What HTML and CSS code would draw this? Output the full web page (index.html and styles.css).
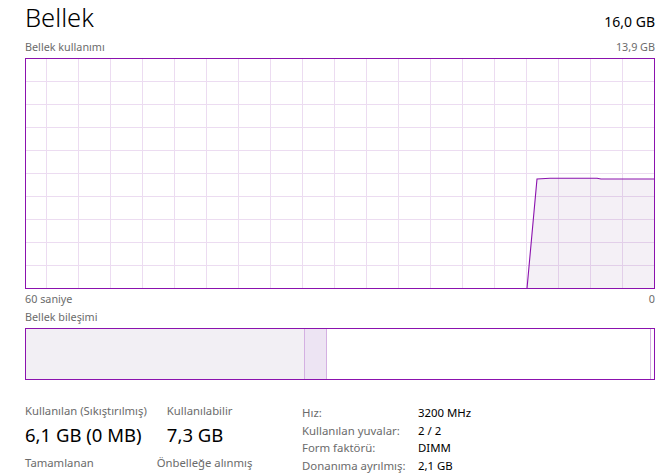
FILE: index.html
```html
<!DOCTYPE html>
<html lang="tr">
<head>
<meta charset="utf-8">
<link rel="stylesheet" href="styles.css">
</head>
<body>
<div class="panel">
  <div class="header">
    <div class="title">Bellek</div>
    <div class="total">16,0 GB</div>
  </div>
  <div class="caption-row">
    <span>Bellek kullanımı</span>
    <span>13,9 GB</span>
  </div>
  <svg class="graph" width="630" height="231" viewBox="0 0 630 231">
    <g stroke="#ecdcf1" stroke-width="1" shape-rendering="crispEdges">
      <line x1="21.5" y1="0" x2="21.5" y2="231"/>
      <line x1="53.5" y1="0" x2="53.5" y2="231"/>
      <line x1="85.5" y1="0" x2="85.5" y2="231"/>
      <line x1="117.5" y1="0" x2="117.5" y2="231"/>
      <line x1="149.5" y1="0" x2="149.5" y2="231"/>
      <line x1="181.5" y1="0" x2="181.5" y2="231"/>
      <line x1="213.5" y1="0" x2="213.5" y2="231"/>
      <line x1="245.5" y1="0" x2="245.5" y2="231"/>
      <line x1="277.5" y1="0" x2="277.5" y2="231"/>
      <line x1="309.5" y1="0" x2="309.5" y2="231"/>
      <line x1="341.5" y1="0" x2="341.5" y2="231"/>
      <line x1="373.5" y1="0" x2="373.5" y2="231"/>
      <line x1="405.5" y1="0" x2="405.5" y2="231"/>
      <line x1="437.5" y1="0" x2="437.5" y2="231"/>
      <line x1="469.5" y1="0" x2="469.5" y2="231"/>
      <line x1="501.5" y1="0" x2="501.5" y2="231"/>
      <line x1="533.5" y1="0" x2="533.5" y2="231"/>
      <line x1="565.5" y1="0" x2="565.5" y2="231"/>
      <line x1="597.5" y1="0" x2="597.5" y2="231"/>
      <line x1="0" y1="23.5" x2="630" y2="23.5"/>
      <line x1="0" y1="46.5" x2="630" y2="46.5"/>
      <line x1="0" y1="69.5" x2="630" y2="69.5"/>
      <line x1="0" y1="92.5" x2="630" y2="92.5"/>
      <line x1="0" y1="115.5" x2="630" y2="115.5"/>
      <line x1="0" y1="138.5" x2="630" y2="138.5"/>
      <line x1="0" y1="161.5" x2="630" y2="161.5"/>
      <line x1="0" y1="184.5" x2="630" y2="184.5"/>
      <line x1="0" y1="207.5" x2="630" y2="207.5"/>
    </g>
    <path d="M502 230.5 L512 121 L525 120.3 L572 120.3 L576 121 L629.5 121 L629.5 230.5 Z" fill="rgba(120,60,140,0.08)" stroke="none"/>
    <path d="M502 230.5 L512 121 L525 120.3 L572 120.3 L576 121 L629.5 121" fill="none" stroke="#8b12ae" stroke-width="1.1"/>
    <rect x="0.5" y="0.5" width="629" height="230" fill="none" stroke="#8b12ae" stroke-width="1" shape-rendering="crispEdges"/>
  </svg>
  <div class="axis-row">
    <span>60 saniye</span>
    <span>0</span>
  </div>
  <div class="caption comp-caption">Bellek bileşimi</div>
  <div class="composition">
    <div class="seg seg-used"></div>
    <div class="seg seg-mod"></div>
    <div class="seg seg-standby"></div>
    <div class="seg seg-free"></div>
  </div>
  <div class="stats">
    <div class="stat-cols">
      <div class="stat-row">
        <div class="stat">
          <div class="label">Kullanılan (Sıkıştırılmış)</div>
          <div class="value">6,1 GB (0 MB)</div>
        </div>
        <div class="stat">
          <div class="label">Kullanılabilir</div>
          <div class="value">7,3 GB</div>
        </div>
      </div>
      <div class="stat-row row2">
        <div class="stat">
          <div class="label">Tamamlanan</div>
        </div>
        <div class="stat">
          <div class="label">Önbelleğe alınmış</div>
        </div>
      </div>
    </div>
    <div class="props">
      <div class="plabel">Hız:</div><div class="pvalue">3200 MHz</div>
      <div class="plabel">Kullanılan yuvalar:</div><div class="pvalue">2 / 2</div>
      <div class="plabel">Form faktörü:</div><div class="pvalue">DIMM</div>
      <div class="plabel">Donanıma ayrılmış:</div><div class="pvalue">2,1 GB</div>
    </div>
  </div>
</div>
</body>
</html>
```

FILE: styles.css
```css
html, body {
  margin: 0;
  padding: 0;
  background: #ffffff;
}
body {
  font-family: "Noto Sans", "Open Sans", sans-serif;
  color: #000;
  width: 669px;
  height: 474px;
  overflow: hidden;
}
.panel {
  padding: 0 14px 0 25px;
  display: flex;
  flex-direction: column;
}
.header {
  display: flex;
  justify-content: space-between;
  align-items: baseline;
  height: 36px;
}
.title {
  font-size: 25.5px;
  font-weight: 350;
  line-height: 36px;
  margin-top: -1px;
}
.total {
  font-size: 14px;
  line-height: 20px;
}
.caption-row, .axis-row {
  display: flex;
  justify-content: space-between;
  font-size: 10.8px;
  color: #6b6b6b;
  line-height: 14px;
  height: 14px;
}
.caption-row {
  margin-top: 4px;
  margin-bottom: 4px;
}
.graph {
  display: block;
}
.axis-row {
  margin-top: 3px;
}
.caption {
  font-size: 10.8px;
  color: #6b6b6b;
  line-height: 14px;
}
.comp-caption {
  margin-top: 4px;
}
.composition {
  margin-top: 4px;
  width: 630px;
  height: 52px;
  box-sizing: border-box;
  border: 1px solid #8b12ae;
  display: flex;
}
.seg {
  height: 100%;
  box-sizing: border-box;
}
.seg-used {
  width: 279px;
  background: #f2eff4;
  border-right: 1px solid #d4b0e2;
}
.seg-mod {
  width: 22px;
  background: #ede4f3;
  border-right: 1px solid #d4b0e2;
}
.seg-standby {
  width: 324px;
  background: #fff;
  border-right: 1px solid #d4b0e2;
}
.seg-free {
  flex: 1;
  background: #fff;
}
.stats {
  display: flex;
  margin-top: 23px;
}
.stat-cols {
  width: 277px;
  display: flex;
  flex-direction: column;
}
.stat-row {
  display: flex;
  gap: 20px;
}
.stat .label {
  font-size: 11.3px;
  color: #6b6b6b;
  line-height: 16px;
}
.stat .value {
  font-size: 18.5px;
  line-height: 26px;
  margin-top: 3px;
}
.row2 {
  margin-top: 7px;
  gap: 63px;
}
.props {
  display: grid;
  grid-template-columns: 116px auto;
  row-gap: 1.5px;
  font-size: 11.4px;
  line-height: 16px;
  padding-top: 2px;
}
.plabel {
  color: #6b6b6b;
}
.pvalue {
  color: #000;
}
```
